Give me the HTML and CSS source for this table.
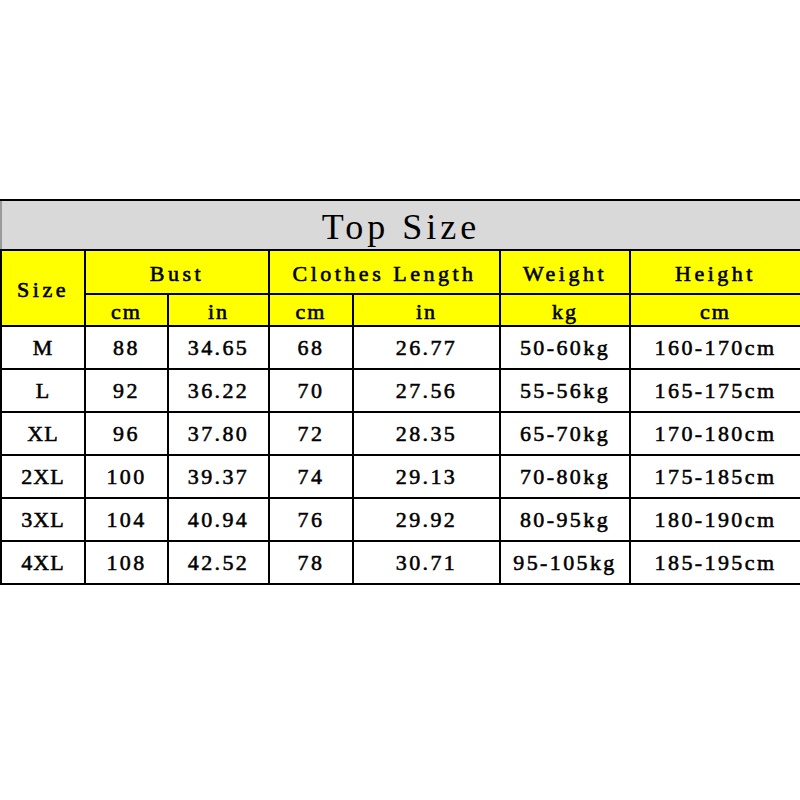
FILE: index.html
```html
<!DOCTYPE html>
<html>
<head>
<meta charset="utf-8">
<link rel="stylesheet" href="styles.css">
</head>
<body>
<div class="page">
  <table class="chart">
    <colgroup>
      <col class="c1"><col class="c2"><col class="c3"><col class="c4"><col class="c5"><col class="c6"><col class="c7">
    </colgroup>
    <tr class="title-row"><th colspan="7" class="title">Top Size</th></tr>
    <tr class="head1">
      <th rowspan="2" class="hd">Size</th>
      <th colspan="2" class="hd">Bust</th>
      <th colspan="2" class="hd">Clothes Length</th>
      <th class="hd">Weight</th>
      <th class="hd">Height</th>
    </tr>
    <tr class="head2">
      <th class="unit">cm</th><th class="unit">in</th><th class="unit">cm</th><th class="unit">in</th><th class="unit">kg</th><th class="unit">cm</th>
    </tr>
    <tr class="row"><td class="sz">M</td><td>88</td><td>34.65</td><td>68</td><td>26.77</td><td>50-60kg</td><td>160-170cm</td></tr>
    <tr class="row"><td class="sz">L</td><td>92</td><td>36.22</td><td>70</td><td>27.56</td><td>55-56kg</td><td>165-175cm</td></tr>
    <tr class="row"><td class="sz">XL</td><td>96</td><td>37.80</td><td>72</td><td>28.35</td><td>65-70kg</td><td>170-180cm</td></tr>
    <tr class="row"><td class="sz">2XL</td><td>100</td><td>39.37</td><td>74</td><td>29.13</td><td>70-80kg</td><td>175-185cm</td></tr>
    <tr class="row"><td class="sz">3XL</td><td>104</td><td>40.94</td><td>76</td><td>29.92</td><td>80-95kg</td><td>180-190cm</td></tr>
    <tr class="row"><td class="sz">4XL</td><td>108</td><td>42.52</td><td>78</td><td>30.71</td><td>95-105kg</td><td>185-195cm</td></tr>
  </table>
</div>
</body>
</html>
```
FILE: styles.css
```css
html, body {
  margin: 0;
  padding: 0;
  background: #ffffff;
}
.page {
  padding-top: 199px;
  width: 800px;
}
.chart {
  width: 800px;
  table-layout: fixed;
  border-collapse: collapse;
  font-family: "Liberation Serif", "Times New Roman", serif;
  color: #000;
}
.c1 { width: 84px; }
.c2 { width: 83px; }
.c3 { width: 101px; }
.c4 { width: 84px; }
.c5 { width: 147px; }
.c6 { width: 130px; }
.c7 { width: 171px; }
.chart th, .chart td {
  border: 2px solid #000;
  padding: 0;
  text-align: center;
  vertical-align: middle;
}
.title-row { height: 50px; }
.title {
  background: #d9d9d9;
  border-left-color: #9a9a9a !important;
  border-right-color: #c0c0c0 !important;
  font-size: 36px;
  font-weight: 400;
  letter-spacing: 4px;
  padding-top: 4px !important;
}
.head1 { height: 44px; }
.head2 { height: 32px; }
.hd, .unit {
  background: #ffff00;
  font-size: 22px;
  font-weight: 400;
  -webkit-text-stroke: 0.6px #000;
  padding-top: 3px !important;
}
.hd { letter-spacing: 3.5px; }
.unit { letter-spacing: 2px; }
.row { height: 43px; }
.row td {
  font-size: 22px;
  letter-spacing: 2.4px;
  -webkit-text-stroke: 0.55px #000;
}
.row td.sz { letter-spacing: 1px; }
```
